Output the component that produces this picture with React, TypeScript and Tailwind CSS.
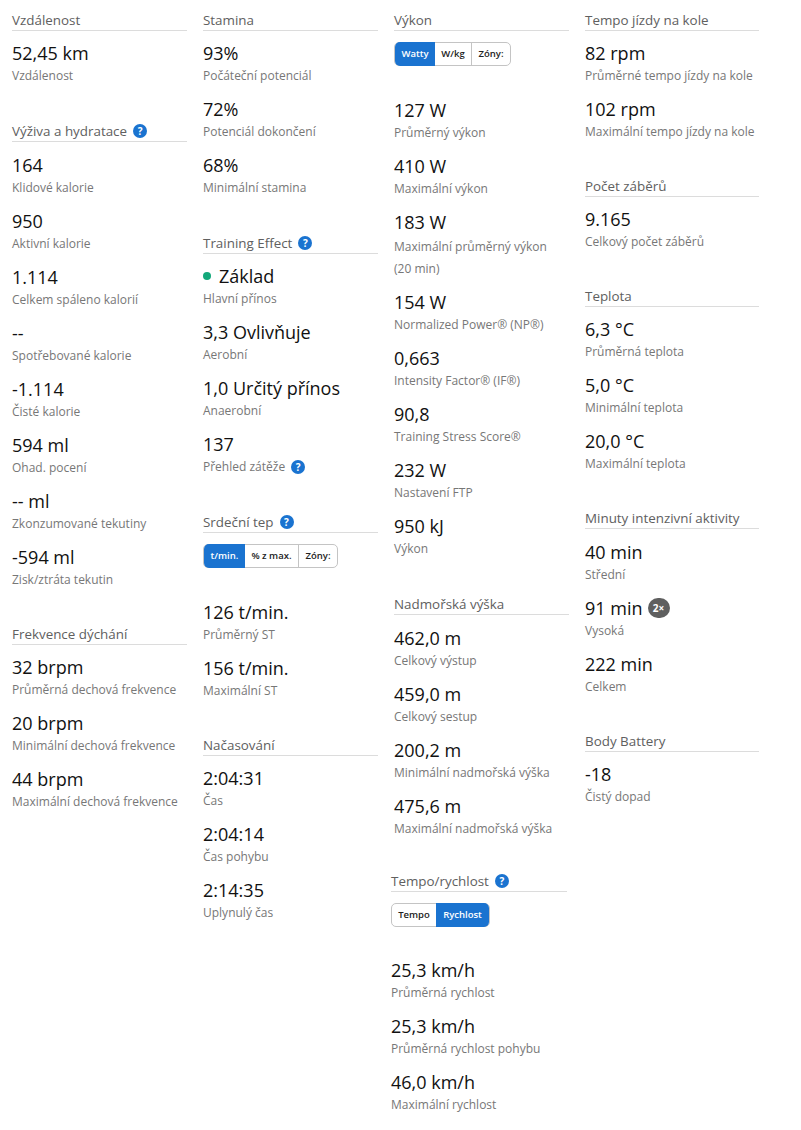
const FONT = "font-['Open_Sans',sans-serif]";

function Help() {
  return (
    <span className="ml-[6px] inline-flex h-[14px] w-[14px] shrink-0 items-center justify-center rounded-full bg-[#1a73d0] text-[10px] leading-none font-bold text-white">
      ?
    </span>
  );
}

function Heading({ title, help, loose }: { title: string; help?: boolean; loose?: boolean }) {
  return (
    <h3
      className={
        (help ? "h-[22px] " : "h-[21px] ") +
        (loose ? "mb-[13px] " : "mb-[12px] ") +
        "flex items-center border-b border-[#dcdcdc] text-[13.4px] leading-[20px] font-normal text-[#606060]"
      }
    >
      {title}
      {help && <Help />}
    </h3>
  );
}

function Stat({
  value,
  label,
  dot,
  help,
  badge,
  tall,
}: {
  value: string;
  label: string;
  dot?: boolean;
  help?: boolean;
  badge?: string;
  tall?: boolean;
}) {
  return (
    <div className="mb-[12px]">
      <div className="flex h-[20px] items-center text-[18px] leading-[20px] text-[#111]">
        {dot && <span className="mr-[8px] h-[8px] w-[8px] rounded-full bg-[#13a87a]" />}
        {value}
        {badge && (
          <span className="ml-[5px] flex h-[20px] w-[22px] items-center justify-center rounded-full bg-[#5f5f5f] text-[10px] font-bold text-white">
            {badge}
          </span>
        )}
      </div>
      <div className={(tall ? "mt-[4px] " : "mt-[2px] ") + "flex items-center text-[12px] leading-[22px] text-[#777]"}>
        <span>{label}</span>
        {help && <Help />}
      </div>
    </div>
  );
}

function Toggle({ items, active }: { items: { label: string; width: string }[]; active: number }) {
  return (
    <div className="-mt-px mb-[34px] flex h-[24px] w-fit rounded-[5px] border border-[#c4c4c4] text-[9.5px] font-semibold">
      {items.map((item, i) => (
        <span
          key={item.label}
          className={
            (i === active ? "bg-[#1a73d0] text-white " : "text-[#222] ") +
            (i > 0 && i !== active && i - 1 !== active ? "border-l border-[#c4c4c4] " : "") +
            (i === 0 ? "rounded-l-[5px] " : "") +
            (i === items.length - 1 ? "rounded-r-[5px] " : "") +
            "-my-px flex items-center justify-center " +
            item.width
          }
        >
          {item.label}
        </span>
      ))}
    </div>
  );
}

function Section({ children }: { children: React.ReactNode }) {
  return <section className="mb-[33px]">{children}</section>;
}

export default function App() {
  return (
    <div className={`${FONT} flex h-[1130px] w-[801px] gap-[16px] bg-white pt-[10px] pl-[12px]`}>
      <div className="w-[175px]">
        <Section>
          <Heading title="Vzdálenost" />
          <Stat value="52,45 km" label="Vzdálenost" />
        </Section>
        <Section>
          <Heading title="Výživa a hydratace" help loose />
          <Stat value="164" label="Klidové kalorie" />
          <Stat value="950" label="Aktivní kalorie" />
          <Stat value="1.114" label="Celkem spáleno kalorií" />
          <Stat value="--" label="Spotřebované kalorie" />
          <Stat value="-1.114" label="Čisté kalorie" />
          <Stat value="594 ml" label="Ohad. pocení" />
          <Stat value="-- ml" label="Zkonzumované tekutiny" />
          <Stat value="-594 ml" label="Zisk/ztráta tekutin" />
        </Section>
        <Section>
          <Heading title="Frekvence dýchání" />
          <Stat value="32 brpm" label="Průměrná dechová frekvence" />
          <Stat value="20 brpm" label="Minimální dechová frekvence" />
          <Stat value="44 brpm" label="Maximální dechová frekvence" />
        </Section>
      </div>

      <div className="w-[175px]">
        <Section>
          <Heading title="Stamina" />
          <Stat value="93%" label="Počáteční potenciál" />
          <Stat value="72%" label="Potenciál dokončení" />
          <Stat value="68%" label="Minimální stamina" />
        </Section>
        <Section>
          <Heading title="Training Effect" help />
          <Stat value="Základ" label="Hlavní přínos" dot />
          <Stat value="3,3 Ovlivňuje" label="Aerobní" />
          <Stat value="1,0 Určitý přínos" label="Anaerobní" />
          <Stat value="137" label="Přehled zátěže" help />
        </Section>
        <Section>
          <Heading title="Srdeční tep" help />
          <Toggle
            active={0}
            items={[
              { label: "t/min.", width: "w-[41px]" },
              { label: "% z max.", width: "w-[53px]" },
              { label: "Zóny:", width: "w-[39px]" },
            ]}
          />
          <Stat value="126 t/min." label="Průměrný ST" />
          <Stat value="156 t/min." label="Maximální ST" />
        </Section>
        <Section>
          <Heading title="Načasování" />
          <Stat value="2:04:31" label="Čas" />
          <Stat value="2:04:14" label="Čas pohybu" />
          <Stat value="2:14:35" label="Uplynulý čas" />
        </Section>
      </div>

      <div className="w-[175px]">
        <Section>
          <Heading title="Výkon" />
          <Toggle
            active={0}
            items={[
              { label: "Watty", width: "w-[40px]" },
              { label: "W/kg", width: "w-[36px]" },
              { label: "Zóny:", width: "w-[39px]" },
            ]}
          />
          <Stat value="127 W" label="Průměrný výkon" />
          <Stat value="410 W" label="Maximální výkon" />
          <Stat value="183 W" label="Maximální průměrný výkon (20&nbsp;min)" tall />
          <Stat value="154 W" label="Normalized Power® (NP®)" />
          <Stat value="0,663" label="Intensity Factor® (IF®)" />
          <Stat value="90,8" label="Training Stress Score®" />
          <Stat value="232 W" label="Nastavení FTP" />
          <Stat value="950 kJ" label="Výkon" />
        </Section>
        <div className="mt-[34px]">
          <Heading title="Nadmořská výška" loose />
          <Stat value="462,0 m" label="Celkový výstup" />
          <Stat value="459,0 m" label="Celkový sestup" />
          <Stat value="200,2 m" label="Minimální nadmořská výška" />
          <Stat value="475,6 m" label="Maximální nadmořská výška" />
        </div>
        <div className="mt-[30px] -ml-[3px] w-[176px]">
          <Heading title="Tempo/rychlost" help />
          <Toggle
            active={1}
            items={[
              { label: "Tempo", width: "w-[44px]" },
              { label: "Rychlost", width: "w-[53px]" },
            ]}
          />
          <div className="-mt-px">
            <Stat value="25,3 km/h" label="Průměrná rychlost" />
            <Stat value="25,3 km/h" label="Průměrná rychlost pohybu" />
            <Stat value="46,0 km/h" label="Maximální rychlost" />
          </div>
        </div>
      </div>

      <div className="w-[174px]">
        <Section>
          <Heading title="Tempo jízdy na kole" />
          <Stat value="82 rpm" label="Průměrné tempo jízdy na kole" />
          <Stat value="102 rpm" label="Maximální tempo jízdy na kole" />
        </Section>
        <Section>
          <Heading title="Počet záběrů" />
          <Stat value="9.165" label="Celkový počet záběrů" />
        </Section>
        <Section>
          <Heading title="Teplota" />
          <Stat value="6,3 °C" label="Průměrná teplota" />
          <Stat value="5,0 °C" label="Minimální teplota" />
          <Stat value="20,0 °C" label="Maximální teplota" />
        </Section>
        <Section>
          <Heading title="Minuty intenzivní aktivity" loose />
          <Stat value="40 min" label="Střední" />
          <Stat value="91 min" label="Vysoká" badge="2×" />
          <Stat value="222 min" label="Celkem" />
        </Section>
        <Section>
          <Heading title="Body Battery" />
          <Stat value="-18" label="Čistý dopad" />
        </Section>
      </div>
    </div>
  );
}
